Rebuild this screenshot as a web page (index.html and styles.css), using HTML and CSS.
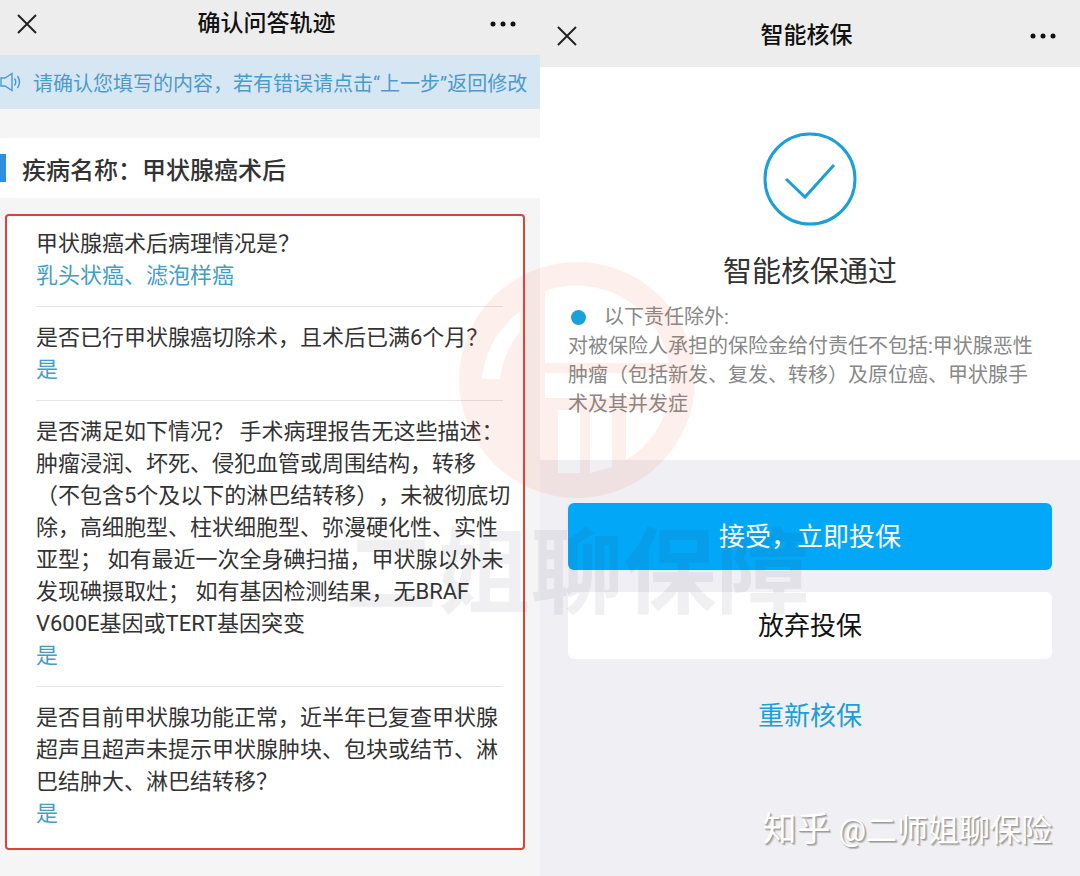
FILE: index.html
```
<!DOCTYPE html>
<html lang="zh-CN">
<head>
  <meta charset="UTF-8">
  <meta name="viewport" content="width=device-width, initial-scale=1.0">
  <title>智能核保</title>
  <link rel="stylesheet" href="styles.css">
</head>
<body>
  <div class="container">
    <section class="panel confirm">
      <header class="navbar">
        <button type="button" class="icon-button" aria-label="关闭">
          <svg width="20" height="20" viewBox="0 0 20 20"><path d="M1 1l18 18M19 1L1 19" fill="none" stroke="#222" stroke-width="2"/></svg>
        </button>
        <h1>确认问答轨迹</h1>
        <button type="button" class="icon-button" aria-label="更多">
          <svg width="26" height="6" viewBox="0 0 26 6" fill="#111"><circle cx="3" cy="3" r="2.5"/><circle cx="13" cy="3" r="2.5"/><circle cx="23" cy="3" r="2.5"/></svg>
        </button>
      </header>
      <div class="notice">
        <svg width="21" height="20" viewBox="0 0 21 20" fill="none" stroke="#4a9ccb" stroke-width="1.4">
          <path d="M1 6h4l7-4.500v17L5 14H1z"/>
          <path d="M14.500 6.500q2.500 3.500 0 7M17.500 4q4 6 0 12"/>
        </svg>
        <p>请确认您填写的内容，若有错误请点击“上一步”返回修改</p>
      </div>
      <h2 class="disease">疾病名称：甲状腺癌术后</h2>
      <div class="answers">
        <div class="item">
          <p>甲状腺癌术后病理情况是？</p>
          <p class="answer">乳头状癌、滤泡样癌</p>
        </div>
        <div class="item">
          <p>是否已行甲状腺癌切除术，且术后已满6个月？</p>
          <p class="answer">是</p>
        </div>
        <div class="item">
          <p>是否满足如下情况？ 手术病理报告无这些描述：肿瘤浸润、坏死、侵犯血管或周围结构，转移（不包含5个及以下的淋巴结转移），未被彻底切除，高细胞型、柱状细胞型、弥漫硬化性、实性亚型； 如有最近一次全身碘扫描，甲状腺以外未发现碘摄取灶； 如有基因检测结果，无BRAF V600E基因或TERT基因突变</p>
          <p class="answer">是</p>
        </div>
        <div class="item">
          <p>是否目前甲状腺功能正常，近半年已复查甲状腺超声且超声未提示甲状腺肿块、包块或结节、淋巴结肿大、淋巴结转移？</p>
          <p class="answer">是</p>
        </div>
      </div>
    </section>

    <section class="panel result">
      <header class="navbar navbar-tall">
        <button type="button" class="icon-button" aria-label="关闭">
          <svg width="20" height="20" viewBox="0 0 20 20"><path d="M1 1l18 18M19 1L1 19" fill="none" stroke="#222" stroke-width="2"/></svg>
        </button>
        <h1>智能核保</h1>
        <button type="button" class="icon-button" aria-label="更多">
          <svg width="26" height="6" viewBox="0 0 26 6" fill="#111"><circle cx="3" cy="3" r="2.5"/><circle cx="13" cy="3" r="2.5"/><circle cx="23" cy="3" r="2.5"/></svg>
        </button>
      </header>
      <div class="summary">
        <svg class="check" width="94" height="94" viewBox="0 0 94 94" fill="none" stroke="#1b9fd8">
          <circle cx="47" cy="47" r="45" stroke-width="3"/>
          <path d="M23 47l19 18 29-32" stroke-width="3"/>
        </svg>
        <h2>智能核保通过</h2>
        <div class="detail">
          <p class="detail-title">以下责任除外:</p>
          <p>对被保险人承担的保险金给付责任不包括:甲状腺恶性肿瘤（包括新发、复发、转移）及原位癌、甲状腺手术及其并发症</p>
        </div>
      </div>
      <div class="actions">
        <button type="button" class="button button-primary">接受，立即投保</button>
        <button type="button" class="button">放弃投保</button>
        <a href="#" class="retry">重新核保</a>
      </div>
      <p class="credit"><span class="credit-site">知乎</span> @二师姐聊保险</p>
    </section>

    <div class="watermark">
      <svg class="watermark-logo" width="238" height="238" viewBox="0 0 238 238">
        <mask id="cut">
          <rect width="238" height="238" fill="#fff"/>
          <g fill="#000">
            <path d="M24 118Q27 79 62 50V70Q45 92 42 118z"/>
            <path d="M87 30A94 94 0 0 1 211 102H87z"/>
            <path d="M87 112H213A94 94 0 0 1 211 137H87z"/>
            <path d="M100 149h22v63h-22zM132 149h22v57l-22 6zM168 149h40A94 94 0 0 1 168 199z"/>
          </g>
        </mask>
        <circle cx="119" cy="119" r="118" fill="#ef5a35" mask="url(#cut)"/>
      </svg>
      <p>二姐聊保障</p>
    </div>
  </div>
</body>
</html>
```
FILE: styles.css
```
* {
  box-sizing: border-box;
}
body {
  margin: 0;
  font-family: Roboto, "Noto Sans CJK SC", sans-serif;
  text-spacing-trim: space-all;
  color: #333;
}
h1, h2, p {
  margin: 0;
}
.container {
  position: relative;
  display: grid;
  grid-template-columns: 1fr 1fr;
  min-height: 100vh;
}
.panel {
  display: flex;
  flex-direction: column;
}
.confirm {
  background-color: #f5f5f5;
}
.result {
  background-color: #efeff4;
}

/* top bars */
.navbar {
  display: flex;
  justify-content: space-between;
  align-items: center;
  height: 55px;
  padding: 0 24px 8px 17px;
  background-color: #ededed;
}
.navbar-tall {
  height: 67px;
  padding-top: 4px;
  padding-bottom: 0;
}
.navbar h1 {
  font-size: 23px;
  line-height: 32px;
  font-weight: 500;
  color: #111;
}
.icon-button {
  display: flex;
  align-items: center;
  width: 26px;
  height: 32px;
  padding: 0;
  border: none;
  background: none;
  cursor: pointer;
}

/* answers to confirm */
.notice {
  display: flex;
  align-items: center;
  gap: 12px;
  height: 54px;
  background-color: #d7e6f3;
  color: #4a9ccb;
  font-size: 20px;
  white-space: nowrap;
}
.disease {
  display: flex;
  align-items: center;
  height: 60px;
  margin: 29px 0 16px;
  background-color: #fff;
  font-size: 24px;
  font-weight: 500;
}
.disease::before {
  content: "";
  width: 6px;
  height: 28px;
  margin-right: 16px;
  background-color: #2e8fe0;
}
.answers {
  margin: 0 15px 0 5px;
  padding: 0 20px 4px 29px;
  border: 2px solid #d9433a;
  border-radius: 4px;
  background-color: #fff;
}
.item {
  padding: 15px 0 14px;
  border-bottom: 1px solid #e6e6e6;
  font-size: 22px;
  line-height: 32px;
}
.item:first-child {
  padding-top: 12px;
}
.item:last-child {
  border-bottom: none;
}
.item p {
  margin-right: -10px;
}
.item .answer {
  color: #439dc5;
}

/* underwriting result */
.summary {
  display: flex;
  flex-direction: column;
  align-items: center;
  padding: 65px 28px 41px;
  background-color: #fff;
}
.summary h2 {
  margin: 25px 0 10px;
  font-size: 29px;
  line-height: 42px;
  font-weight: 400;
}
.detail {
  width: 100%;
  padding-right: 8px;
  font-size: 20px;
  line-height: 29px;
  color: #888;
}
.detail-title {
  display: flex;
  align-items: center;
  gap: 18px;
}
.detail-title::before {
  content: "";
  width: 15px;
  height: 15px;
  margin-left: 3px;
  border-radius: 50%;
  background-color: #1b9fd8;
}
.actions {
  display: flex;
  flex-direction: column;
  align-items: center;
  gap: 22px;
  padding: 43px 28px 0;
}
.button {
  width: 100%;
  height: 67px;
  padding: 0 0 4px;
  border: none;
  border-radius: 6px;
  background-color: #fff;
  color: #111;
  font-family: inherit;
  font-size: 26px;
  cursor: pointer;
}
.button-primary {
  background-color: #02a7f8;
  color: #fff;
}
.retry {
  margin-top: 16px;
  font-size: 26px;
  line-height: 38px;
  color: #1b9fd8;
  text-decoration: none;
}
.credit {
  margin: auto 28px 22px auto;
  font-size: 31px;
  line-height: 46px;
  color: #fff;
  text-shadow: 1px 1px 1px #999, 2px 2px 1px #bbb;
}
.credit-site {
  font-size: 34px;
}

/* watermark over both panels */
.watermark {
  position: absolute;
  top: 261px;
  left: 0;
  right: 0;
  display: flex;
  flex-direction: column;
  align-items: center;
  pointer-events: none;
}
.watermark-logo {
  margin-left: 74px;
  opacity: 0.09;
}
.watermark p {
  margin-left: 74px;
  font-size: 93px;
  line-height: 152px;
  font-weight: 700;
  color: rgba(70, 70, 90, 0.08);
}
```
